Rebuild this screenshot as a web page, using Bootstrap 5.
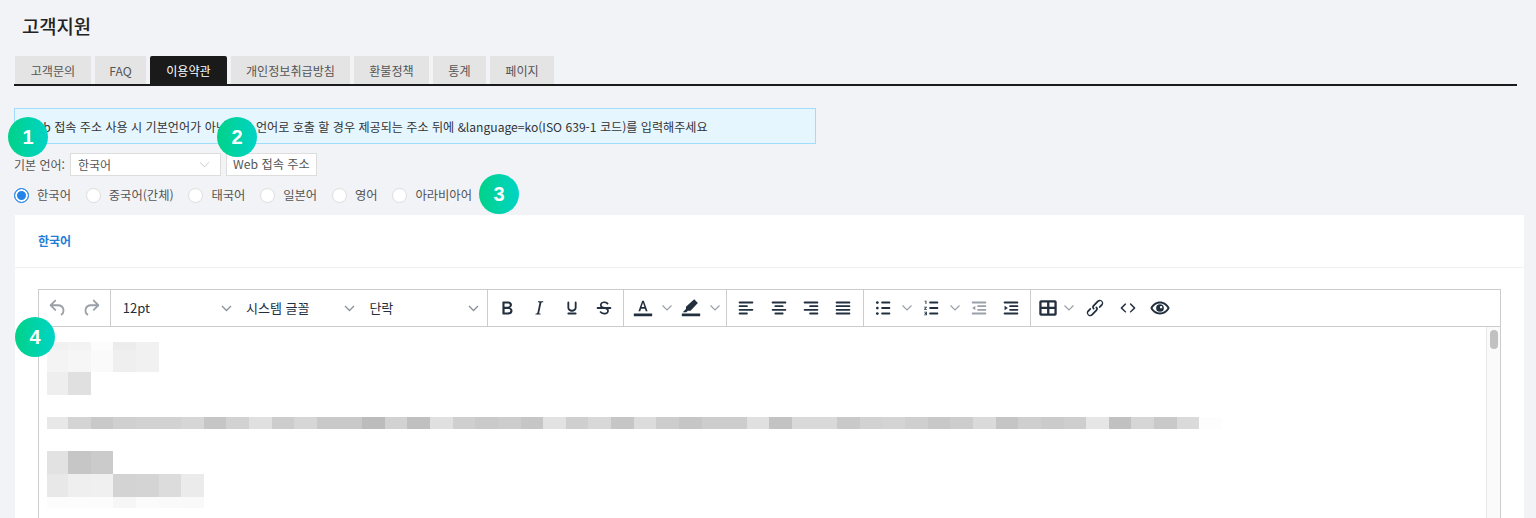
<!DOCTYPE html>
<html lang="ko">
<head>
  <meta charset="UTF-8">
  <title>고객지원</title>
  <link href="https://cdn.jsdelivr.net/npm/bootstrap@5.3.2/dist/css/bootstrap.min.css" rel="stylesheet">
  <style>
    html, body { height: 518px; overflow: hidden; }
    body {
      background: #f2f3f7;
      color: #333;
      font-family: "Noto Sans CJK KR", "Noto Sans", sans-serif;
      font-size: 12px;
      position: relative;
    }
    .page-wrap { padding: 0 0 0 14px; }
    .page-title { font-size: 18.8px; font-weight: 500; color: #222; margin: 0; padding: 13px 0 0 8px; line-height: 26px; height: 56px; }

    .tab-row { border-bottom: 2px solid #1a1a1a; gap: 4px; height: 30px; width: 1503px; padding-left: 1px; }
    .tab-row a {
      display: block; height: 28px; line-height: 29px; text-align: center;
      background: #e4e4e4; color: #555; text-decoration: none; font-size: 12.1px;
    }
    .tab-row a.on { background: #1a1a1a; color: #fff; border-radius: 2px 2px 0 0; }

    .lang-note {
      width: 802px; height: 36px; margin-top: 22px; padding: 0 0 0 11px; line-height: 35px;
      background: #e6f6ff; border: 1px solid #a3dcfb; color: #333; font-size: 12.1px;
    }
    .lang-row { margin-top: 9px; height: 23px; }
    .lang-row label { color: #555; margin-right: 5px; font-size: 12px; }
    .fake-select {
      width: 151px; height: 23px; background: #fff; border: 1px solid #ddd; color: #555;
      padding: 0 10px 0 7px; line-height: 21px;
    }
    .url-btn {
      width: 91px; height: 23px; margin-left: 5px; padding: 0; background: #fff; border: 1px solid #ddd;
      color: #555; font-size: 12.2px; line-height: 21px; border-radius: 0;
    }
    .radio-row { height: 39px; color: #555; font-size: 12.3px; }
    .radio-dot {
      width: 15px; height: 15px; border-radius: 50%; border: 1px solid #ddd; background: #fff;
      margin-right: 8px; flex: none;
    }
    .radio-dot.on { border-color: #2383e8; box-shadow: inset 0 0 0 2px #fff; background: #2383e8; }
    .radio-opt { margin-right: 14.8px; }

    .lang-card { background: #fff; width: 1509px; height: 400px; margin-left: 1px; border: 0; border-radius: 0; }
    .lang-card-head { height: 53px; padding: 0 0 0 23px; line-height: 51px; color: #1c7ed6; font-weight: 700; border-bottom: 1px solid #f0f0f0; }
    .lang-card-body { padding: 21px 23px 0; }

    .ed-box { width: 1463px; height: 300px; border: 1px solid #ccc; }
    .ed-bar { height: 37px; border-bottom: 1px solid #ccc; }
    .ed-group { display: flex; align-items: center; padding: 0 3px; border-right: 1px solid #ccc; height: 100%; }
    .ed-group.last { border-right: 0; }
    .ed-btn { width: 32.4px; height: 100%; display: flex; align-items: center; justify-content: center; flex: none; }
    .ed-btn svg { width: 22px; height: 22px; fill: #222f3e; }
    .ed-btn.off svg { fill: #9aa0a8; }
    .ed-btn.arrow { width: 15.5px; }
    .ed-btn.arrow svg { width: 10px; height: 6px; fill: none; stroke: #9aa0a8; stroke-width: 1.2; }
    .ed-sel { width: 123.3px; padding: 0 5px 0 9px; color: #222f3e; font-size: 13px; display: flex; align-items: center; justify-content: space-between; }
    .ed-sel svg { width: 11px; height: 7px; fill: none; stroke: #8a9099; stroke-width: 1.3; }

    .ed-text { height: 260px; }
    .ed-content { padding-top: 15px; padding-left: 8px; flex: 1; }
    .blur-row { display: flex; }
    .blur-row i { display: block; width: 22.64px; height: 100%; flex: none; }
    .blur-row i:first-child { width: 21.1px; }
    .ed-scroll { width: 14px; background: #fafafa; border-left: 1px solid #e8e8e8; padding: 3px 3px 0; }
    .ed-thumb { height: 19px; width: 8px; background: #c1c1c1; border-radius: 4px; }

    .step-mark {
      position: absolute; width: 40px; height: 40px; border-radius: 50%;
      background: linear-gradient(90deg, #00d288, #00d4c6);
      color: #fff; font: 700 20px/40px "Liberation Sans", sans-serif; text-align: center;
    }
  </style>
</head>
<body>
  <div class="page-wrap">
    <h1 class="page-title">고객지원</h1>

    <div class="tab-row d-flex">
      <a href="#" style="width:76px">고객문의</a>
      <a href="#" style="width:51px">FAQ</a>
      <a href="#" class="on" style="width:77px">이용약관</a>
      <a href="#" style="width:119px">개인정보취급방침</a>
      <a href="#" style="width:75px">환불정책</a>
      <a href="#" style="width:53px">통계</a>
      <a href="#" style="width:64px">페이지</a>
    </div>

    <div class="lang-note">Web 접속 주소 사용 시 기본언어가 아닌 다른 언어로 호출 할 경우 제공되는 주소 뒤에 &amp;language=ko(ISO 639-1 코드)를 입력해주세요</div>

    <div class="lang-row d-flex align-items-center">
      <label>기본 언어:</label>
      <div class="fake-select d-flex align-items-center justify-content-between">
        <span>한국어</span>
        <svg width="11" height="7" viewBox="0 0 12 7" fill="none" stroke="#c4c4c4"><path d="M1 1l5 5 5-5"/></svg>
      </div>
      <button type="button" class="btn url-btn">Web 접속 주소</button>
    </div>

    <div class="radio-row d-flex align-items-center">
      <div class="radio-opt d-flex align-items-center"><span class="radio-dot on"></span>한국어</div>
      <div class="radio-opt d-flex align-items-center"><span class="radio-dot"></span>중국어(간체)</div>
      <div class="radio-opt d-flex align-items-center"><span class="radio-dot"></span>태국어</div>
      <div class="radio-opt d-flex align-items-center"><span class="radio-dot"></span>일본어</div>
      <div class="radio-opt d-flex align-items-center"><span class="radio-dot"></span>영어</div>
      <div class="radio-opt d-flex align-items-center"><span class="radio-dot"></span>아라비아어</div>
    </div>

    <div class="card lang-card">
      <div class="lang-card-head">한국어</div>
      <div class="lang-card-body">
        <div class="ed-box">
          <div class="ed-bar d-flex">
            <div class="ed-group">
              <span class="ed-btn off"><svg viewBox="0 0 24 24"><path d="M6.4 8H12c3.7 0 6.2 2 6.8 5.1.6 2.7-.4 5.6-2.3 6.8a1 1 0 0 1-1-1.8c1.1-.6 1.8-2.7 1.4-4.6-.5-2.1-2.1-3.5-4.9-3.5H6.4l3.3 3.3a1 1 0 1 1-1.4 1.4l-5-5a1 1 0 0 1 0-1.4l5-5a1 1 0 0 1 1.4 1.4L6.4 8Z"/></svg></span>
              <span class="ed-btn off"><svg viewBox="0 0 24 24"><path d="M17.6 10H12c-2.8 0-4.4 1.4-4.9 3.5-.4 2 .3 4 1.4 4.6a1 1 0 1 1-1 1.8c-2-1.2-2.9-4.1-2.3-6.8.6-3 3-5.1 6.8-5.1h5.6l-3.3-3.3a1 1 0 1 1 1.4-1.4l5 5a1 1 0 0 1 0 1.4l-5 5a1 1 0 0 1-1.4-1.4l3.3-3.3Z"/></svg></span>
            </div>
            <div class="ed-group">
              <div class="ed-sel"><span>12pt</span><svg viewBox="0 0 11 7"><path d="M1 1l4.5 4.5L10 1"/></svg></div>
              <div class="ed-sel"><span>시스템 글꼴</span><svg viewBox="0 0 11 7"><path d="M1 1l4.5 4.5L10 1"/></svg></div>
              <div class="ed-sel"><span>단락</span><svg viewBox="0 0 11 7"><path d="M1 1l4.5 4.5L10 1"/></svg></div>
            </div>
            <div class="ed-group">
              <span class="ed-btn"><svg viewBox="0 0 24 24"><path d="M7.8 19c-.3 0-.5 0-.6-.2l-.2-.5V5.7c0-.2 0-.4.2-.5l.6-.2h5c1.5 0 2.7.3 3.5 1 .7.6 1.1 1.4 1.1 2.5a3 3 0 0 1-.6 1.9c-.4.6-1 1-1.6 1.2.4.1.9.3 1.3.6s.8.7 1 1.2c.4.4.5 1 .5 1.6 0 1.3-.4 2.3-1.3 3-.8.7-2.1 1-3.8 1H7.8Zm5-8.3c.6 0 1.2-.1 1.6-.5.4-.3.6-.7.6-1.3 0-1.1-.8-1.7-2.3-1.7H9.3v3.5h3.4Zm.5 6c.7 0 1.3-.1 1.7-.4.4-.4.6-.9.6-1.5s-.2-1-.7-1.4c-.4-.3-1-.4-2-.4H9.4v3.8h4Z"/></svg></span>
              <span class="ed-btn"><svg viewBox="0 0 24 24"><path d="m16.7 4.7-.1.9h-.3c-.6 0-1 0-1.4.3-.3.3-.4.6-.5 1.1l-2.1 9.8v.6c0 .5.4.8 1.4.8h.2l-.2.8H8l.2-.8h.2c1.1 0 1.8-.5 2-1.5l2-9.8.1-.5c0-.6-.4-.8-1.4-.8h-.3l.2-.9h5.8Z"/></svg></span>
              <span class="ed-btn"><svg viewBox="0 0 24 24"><path d="M16 5c.6 0 1 .4 1 1v5.5a4 4 0 0 1-.4 1.8l-1 1.4a5.3 5.3 0 0 1-5.5 1 5 5 0 0 1-1.6-1c-.5-.4-.8-.9-1.1-1.4a4 4 0 0 1-.4-1.8V6c0-.6.4-1 1-1s1 .4 1 1v5.5c0 .3 0 .6.2 1l.6.7a3.3 3.3 0 0 0 2.2.8 3.4 3.4 0 0 0 2.2-.8c.3-.2.4-.5.6-.8l.2-.9V6c0-.6.4-1 1-1ZM8 17h8c.6 0 1 .4 1 1s-.4 1-1 1H8a1 1 0 0 1 0-2Z"/></svg></span>
              <span class="ed-btn"><svg viewBox="0 0 24 24"><path d="M15.6 8.5c-.5-.7-1-1.1-1.3-1.3-.6-.4-1.3-.6-2-.6-2.7 0-2.8 1.7-2.8 2.1 0 1.6 1.8 2 3.2 2.3 4.4.9 4.6 2.8 4.6 3.9 0 1.4-.7 4.1-5 4.1A6.2 6.2 0 0 1 7 16.4l1.5-1.1c.4.6 1.6 2 3.7 2 1.6 0 2.5-.4 3-1.2.4-.8.3-2-.8-2.6-.7-.4-1.6-.7-2.9-1-1-.2-3.9-.8-3.9-3.6C7.6 6 10.3 5 12.4 5c2.9 0 4.2 1.6 4.7 2.4l-1.5 1.1Z"/><path d="M5 11h14a1 1 0 0 1 0 2H5a1 1 0 0 1 0-2Z"/></svg></span>
            </div>
            <div class="ed-group">
              <span class="ed-btn"><svg viewBox="0 0 24 24"><path d="M2 18h20v3H2z"/><path d="M12.9 4h-1.8L7 15.5h2l.9-2.8h4.2l.9 2.8h2L12.9 4Zm-2.4 7L12 6.4 13.5 11h-3Z"/></svg></span>
              <span class="ed-btn arrow"><svg viewBox="0 0 10 6"><path d="M.5.5 5 5 9.5 .5"/></svg></span>
              <span class="ed-btn"><svg viewBox="0 0 24 24"><path d="M2 18h20v3H2z"/><path d="M15.5 2.5l4 4-8 8.5H8.5L7 16.5H3l3.5-3.5v-2.5z"/></svg></span>
              <span class="ed-btn arrow"><svg viewBox="0 0 10 6"><path d="M.5.5 5 5 9.5 .5"/></svg></span>
            </div>
            <div class="ed-group">
              <span class="ed-btn"><svg viewBox="0 0 24 24"><path d="M5 5h14a1 1 0 0 1 0 2H5a1 1 0 1 1 0-2Zm0 4h8a1 1 0 0 1 0 2H5a1 1 0 1 1 0-2Zm0 8h8a1 1 0 0 1 0 2H5a1 1 0 0 1 0-2Zm0-4h14a1 1 0 0 1 0 2H5a1 1 0 0 1 0-2Z"/></svg></span>
              <span class="ed-btn"><svg viewBox="0 0 24 24"><path d="M5 5h14a1 1 0 0 1 0 2H5a1 1 0 1 1 0-2Zm3 4h8a1 1 0 0 1 0 2H8a1 1 0 1 1 0-2Zm0 8h8a1 1 0 0 1 0 2H8a1 1 0 0 1 0-2Zm-3-4h14a1 1 0 0 1 0 2H5a1 1 0 0 1 0-2Z"/></svg></span>
              <span class="ed-btn"><svg viewBox="0 0 24 24"><path d="M5 5h14a1 1 0 0 1 0 2H5a1 1 0 1 1 0-2Zm6 4h8a1 1 0 0 1 0 2h-8a1 1 0 0 1 0-2Zm0 8h8a1 1 0 0 1 0 2h-8a1 1 0 0 1 0-2Zm-6-4h14a1 1 0 0 1 0 2H5a1 1 0 0 1 0-2Z"/></svg></span>
              <span class="ed-btn"><svg viewBox="0 0 24 24"><path d="M5 5h14a1 1 0 0 1 0 2H5a1 1 0 1 1 0-2Zm0 4h14a1 1 0 0 1 0 2H5a1 1 0 1 1 0-2Zm0 8h14a1 1 0 0 1 0 2H5a1 1 0 0 1 0-2Zm0-4h14a1 1 0 0 1 0 2H5a1 1 0 0 1 0-2Z"/></svg></span>
            </div>
            <div class="ed-group">
              <span class="ed-btn"><svg viewBox="0 0 24 24"><path d="M11 5h8a1 1 0 0 1 0 2h-8a1 1 0 0 1 0-2Zm0 6h8a1 1 0 0 1 0 2h-8a1 1 0 0 1 0-2Zm0 6h8a1 1 0 0 1 0 2h-8a1 1 0 0 1 0-2Z"/><circle cx="5.8" cy="6" r="1.5"/><circle cx="5.8" cy="12" r="1.5"/><circle cx="5.8" cy="18" r="1.5"/></svg></span>
              <span class="ed-btn arrow"><svg viewBox="0 0 10 6"><path d="M.5.5 5 5 9.5 .5"/></svg></span>
              <span class="ed-btn"><svg viewBox="0 0 24 24"><path d="M11 5h8a1 1 0 0 1 0 2h-8a1 1 0 0 1 0-2Zm0 6h8a1 1 0 0 1 0 2h-8a1 1 0 0 1 0-2Zm0 6h8a1 1 0 0 1 0 2h-8a1 1 0 0 1 0-2Z"/><path d="M5 4h2v3.5H6V5H5zM4.5 10.5h3v1l-1.8 1.500h1.800v1h-3v-1l1.800-1.500H4.500zM4.500 16h3v4h-3v-1h2v-.5H5.300v-1h1.200V17h-2z"/></svg></span>
              <span class="ed-btn arrow"><svg viewBox="0 0 10 6"><path d="M.5.5 5 5 9.5 .5"/></svg></span>
              <span class="ed-btn off"><svg viewBox="0 0 24 24"><path d="M5 5h14a1 1 0 0 1 0 2H5a1 1 0 1 1 0-2Zm6 4h8a1 1 0 0 1 0 2h-8a1 1 0 0 1 0-2Zm0 4h8a1 1 0 0 1 0 2h-8a1 1 0 0 1 0-2Zm-6 4h14a1 1 0 0 1 0 2H5a1 1 0 0 1 0-2Z"/><path d="M8 9.5v5l-3.500-2.500z"/></svg></span>
              <span class="ed-btn"><svg viewBox="0 0 24 24"><path d="M5 5h14a1 1 0 0 1 0 2H5a1 1 0 1 1 0-2Zm6 4h8a1 1 0 0 1 0 2h-8a1 1 0 0 1 0-2Zm0 4h8a1 1 0 0 1 0 2h-8a1 1 0 0 1 0-2Zm-6 4h14a1 1 0 0 1 0 2H5a1 1 0 0 1 0-2Z"/><path d="M5 9.5v5l3.500-2.500z"/></svg></span>
            </div>
            <div class="ed-group last">
              <span class="ed-btn" style="width:28px"><svg viewBox="0 0 24 24"><path d="M4.500 3.500h15a2 2 0 0 1 2 2v13a2 2 0 0 1-2 2h-15a2 2 0 0 1-2-2v-13a2 2 0 0 1 2-2Zm.5 7h6V6H5v4.500Zm8.500 0H19V6h-5.500v4.500ZM5 18h6v-5H5v5Zm8.500 0H19v-5h-5.500v5Z"/></svg></span>
              <span class="ed-btn arrow" style="width:14px;margin-right:3px"><svg viewBox="0 0 10 6"><path d="M.5.5 5 5 9.5 .5"/></svg></span>
              <span class="ed-btn"><svg viewBox="0 0 24 24"><path d="M6.200 12.300a1 1 0 0 1 1.400 1.400l-2 2a2 2 0 1 0 2.600 2.800l4.800-4.800a1 1 0 0 0 0-1.400 1 1 0 1 1 1.400-1.300 2.900 2.900 0 0 1 0 4L9.600 20a3.900 3.900 0 0 1-5.500-5.500l2-2Zm11.600-.6a1 1 0 0 1-1.400-1.400l2-2a2 2 0 1 0-2.600-2.800L11 10.300a1 1 0 0 0 0 1.400 1 1 0 1 1-1.400 1.300 2.900 2.900 0 0 1 0-4L14.400 4a3.900 3.900 0 0 1 5.500 5.500l-2 2Z"/></svg></span>
              <span class="ed-btn"><svg viewBox="0 0 24 24"><path d="M9.800 15.700c.3.300.3.800 0 1-.3.400-.9.400-1.200 0l-4.400-4.100a.8.800 0 0 1 0-1.200l4.400-4.200c.3-.3.900-.3 1.200 0 .3.300.3.800 0 1.100L6 12l3.800 3.700ZM14.200 15.700c-.3.300-.3.800 0 1 .4.400.9.400 1.200 0l4.400-4.100c.3-.3.300-.9 0-1.200l-4.400-4.200a.8.800 0 0 0-1.200 0c-.3.300-.3.800 0 1.100L18 12l-3.800 3.700Z"/></svg></span>
              <span class="ed-btn"><svg viewBox="0 0 24 24"><path fill-rule="evenodd" d="M12 5c4.600 0 8.400 2.800 10.500 7-2.100 4.200-5.900 7-10.500 7S3.600 16.200 1.500 12C3.600 7.800 7.400 5 12 5Zm0 2c-3.500 0-6.400 2-8.200 5 1.800 3 4.700 5 8.200 5s6.400-2 8.200-5c-1.800-3-4.700-5-8.200-5Z"/><path fill-rule="evenodd" d="M12 7.800a4.200 4.200 0 1 1 0 8.400 4.200 4.200 0 0 1 0-8.400Zm1.200 2a1.300 1.300 0 1 0 0 2.600 1.300 1.300 0 0 0 0-2.600Z"/></svg></span>
            </div>
          </div>
          <div class="ed-text d-flex">
            <div class="ed-content" id="blurred"></div>
            <div class="ed-scroll"><div class="ed-thumb"></div></div>
          </div>
        </div>
      </div>
    </div>
  </div>

  <span class="step-mark" style="left:8px;top:117px">1</span>
  <span class="step-mark" style="left:217px;top:117px">2</span>
  <span class="step-mark" style="left:479px;top:174px">3</span>
  <span class="step-mark" style="left:15px;top:317px">4</span>

  <script src="https://cdn.jsdelivr.net/npm/bootstrap@5.3.2/dist/js/bootstrap.bundle.min.js"></script>
  <script>
    // the editor text is pixelated in the source picture: rows of grey cells
    const rows = [
      [8, 'f1 f3 fc ec f1'],
      [22, 'f4 f6 fa ef f1'],
      [23, 'ee e0'],
      [22, ''],
      [12, 'e8 d4 c9 d0 d2 d2 d6 c6 d2 e0 cd d6 c9 c9 bc d2 c0 e0 cf ca cd c6 e2 cf d8 c6 dc cd c6 cd cd e0 c3 d9 d9 c9 d2 d4 cf c8 cd da c5 cf cb ce e6 c1 d6 c9 da fd'],
      [22, ''],
      [23, 'e2 c6 cb'],
      [23, 'e8 ef f0 d3 d4 dc eb'],
      [11, 'fc fc fc f6 fb fa f9']
    ];
    const box = document.getElementById('blurred');
    rows.forEach(function (r) {
      const row = document.createElement('div');
      row.className = 'blur-row';
      row.style.height = r[0] + 'px';
      r[1].split(' ').filter(Boolean).forEach(function (c) {
        const cell = document.createElement('i');
        cell.style.background = '#' + c + c + c;
        row.appendChild(cell);
      });
      box.appendChild(row);
    });
  </script>
</body>
</html>
